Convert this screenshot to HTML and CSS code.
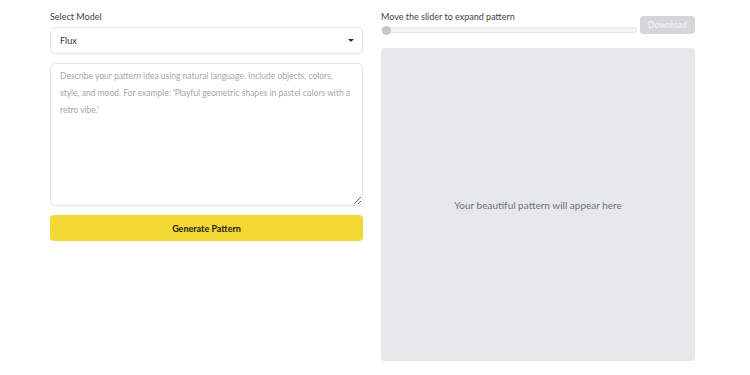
FILE: index.html
```
<!DOCTYPE html>
<html lang="en">
<head>
    <meta charset="UTF-8">
    <meta name="viewport" content="width=device-width, initial-scale=1.0">
    <title>Pattern Generator</title>
    <link rel="stylesheet" href="styles.css">
</head>
<body>
    <div class="app">
        <div class="left">
            <label class="field-label" for="model">Select Model</label>
            <div class="select-wrap">
                <select id="model" class="select">
                    <option>Flux</option>
                </select>
                <span class="caret"></span>
            </div>
            <textarea class="prompt" placeholder="Describe your pattern idea using natural language. Include objects, colors, style, and mood. For example: 'Playful geometric shapes in pastel colors with a retro vibe.'"></textarea>
            <button class="generate">Generate Pattern</button>
        </div>
        <div class="right">
            <div class="toolbar">
                <div class="slider-group">
                    <label class="field-label" for="expand">Move the slider to expand pattern</label>
                    <input type="range" id="expand" class="slider" min="0" max="100" value="0">
                </div>
                <button class="download" disabled>Download</button>
            </div>
            <div class="preview">
                <p>Your beautiful pattern will appear here</p>
            </div>
        </div>
    </div>
</body>
</html>
```

FILE: styles.css
```
body {
    font-family: 'Lato', 'Noto Sans', sans-serif;
    margin: 0;
    padding: 0;
    background: #fff;
    color: #333;
}
.app {
    display: flex;
    gap: 18px;
    padding: 10px 55px 15px 50px;
}
.left {
    width: 313px;
    display: flex;
    flex-direction: column;
}
.right {
    width: 314px;
    display: flex;
    flex-direction: column;
}
.field-label {
    display: block;
    font-size: 9px;
    color: #444;
    margin-bottom: 3px;
    line-height: 14px;
}
.select-wrap {
    position: relative;
    margin-bottom: 9px;
}
.select {
    display: block;
    width: 100%;
    height: 27px;
    appearance: none;
    -webkit-appearance: none;
    border: 1px solid #e5e7eb;
    border-radius: 5px;
    background: #fff;
    font-family: inherit;
    font-size: 9px;
    color: #333;
    padding: 0 9px;
    box-shadow: 0 1px 2px rgba(0, 0, 0, 0.04);
}
.caret {
    position: absolute;
    right: 9px;
    top: 12px;
    width: 0;
    height: 0;
    border-left: 3px solid transparent;
    border-right: 3px solid transparent;
    border-top: 3px solid #333;
}
.prompt {
    height: 143px;
    box-sizing: border-box;
    border: 1px solid #e5e7eb;
    border-radius: 5px;
    padding: 4px 9px;
    font-family: inherit;
    font-size: 8.5px;
    line-height: 17px;
    color: #333;
    resize: vertical;
    margin: 0 0 9px 0;
    box-shadow: 0 1px 2px rgba(0, 0, 0, 0.04);
}
.prompt::placeholder {
    color: #a3a7ae;
}
.generate {
    height: 26px;
    border: none;
    border-radius: 4px;
    background: #f4d833;
    color: #222;
    font-family: inherit;
    font-size: 9px;
    font-weight: 700;
    cursor: pointer;
}
.toolbar {
    display: flex;
    align-items: flex-start;
    gap: 5px;
    margin-bottom: 14px;
}
.slider-group {
    flex: 1;
}
.slider {
    display: block;
    -webkit-appearance: none;
    appearance: none;
    width: 100%;
    height: 4px;
    margin: 0;
    background: #f3f4f6;
    border: 1px solid #e5e7eb;
    border-radius: 3px;
}
.slider::-webkit-slider-thumb {
    -webkit-appearance: none;
    width: 9px;
    height: 9px;
    border-radius: 50%;
    background: #c4c6ca;
}
.download {
    margin-top: 6px;
    width: 55px;
    height: 18px;
    border: none;
    border-radius: 4px;
    background: #d4d6da;
    color: #f1f2f4;
    font-family: inherit;
    font-size: 8.5px;
    font-weight: 700;
}
.preview {
    height: 313px;
    background: #e5e7eb;
    border-radius: 4px;
    display: flex;
    align-items: center;
    justify-content: center;
}
.preview p {
    margin: 0;
    font-size: 10px;
    color: #6b7280;
}
```
